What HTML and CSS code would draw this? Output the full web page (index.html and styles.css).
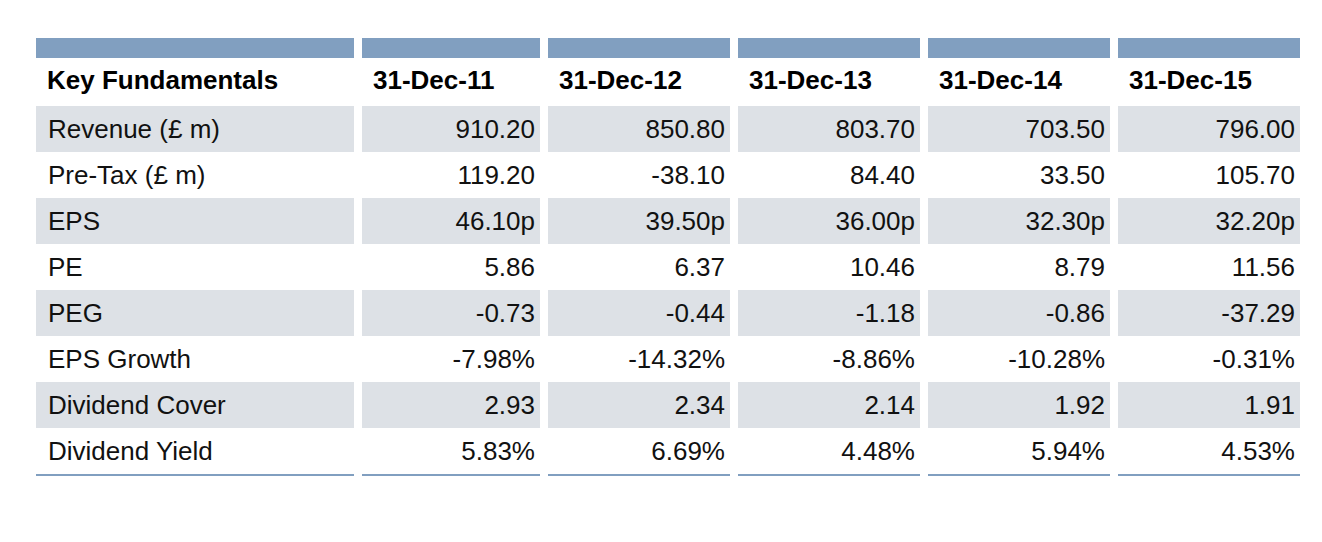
FILE: index.html
```html
<!DOCTYPE html>
<html lang="en">
<head>
<meta charset="utf-8">
<title>Key Fundamentals</title>
<link rel="stylesheet" href="styles.css">
</head>
<body>
<div class="wrap">
<table class="fund">
  <colgroup>
    <col class="c-label"><col class="c-narrow"><col class="c-num"><col class="c-num"><col class="c-num"><col class="c-num">
  </colgroup>
  <thead>
    <tr class="bar"><td></td><td></td><td></td><td></td><td></td><td></td></tr>
    <tr class="head">
      <th class="label">Key Fundamentals</th>
      <th>31-Dec-11</th><th>31-Dec-12</th><th>31-Dec-13</th><th>31-Dec-14</th><th>31-Dec-15</th>
    </tr>
  </thead>
  <tbody>
    <tr class="alt"><td class="label">Revenue (£ m)</td><td>910.20</td><td>850.80</td><td>803.70</td><td>703.50</td><td>796.00</td></tr>
    <tr><td class="label">Pre-Tax (£ m)</td><td>119.20</td><td>-38.10</td><td>84.40</td><td>33.50</td><td>105.70</td></tr>
    <tr class="alt"><td class="label">EPS</td><td>46.10p</td><td>39.50p</td><td>36.00p</td><td>32.30p</td><td>32.20p</td></tr>
    <tr><td class="label">PE</td><td>5.86</td><td>6.37</td><td>10.46</td><td>8.79</td><td>11.56</td></tr>
    <tr class="alt"><td class="label">PEG</td><td>-0.73</td><td>-0.44</td><td>-1.18</td><td>-0.86</td><td>-37.29</td></tr>
    <tr><td class="label">EPS Growth</td><td>-7.98%</td><td>-14.32%</td><td>-8.86%</td><td>-10.28%</td><td>-0.31%</td></tr>
    <tr class="alt"><td class="label">Dividend Cover</td><td>2.93</td><td>2.34</td><td>2.14</td><td>1.92</td><td>1.91</td></tr>
    <tr class="last"><td class="label">Dividend Yield</td><td>5.83%</td><td>6.69%</td><td>4.48%</td><td>5.94%</td><td>4.53%</td></tr>
  </tbody>
</table>
</div>
</body>
</html>
```

FILE: styles.css
```css
html, body {
  margin: 0;
  padding: 0;
  background: #ffffff;
}
body {
  font-family: "Liberation Sans", Arial, Helvetica, sans-serif;
  color: #111111;
}
.wrap {
  padding: 38px 0 0 28px;
}
.fund {
  border-collapse: separate;
  border-spacing: 8px 0;
  table-layout: fixed;
  width: 1280px;
  font-size: 26px;
}
.c-label { width: 318px; }
.c-narrow { width: 178px; }
.c-num { width: 182px; }
.fund td, .fund th {
  padding: 0 5px 0 12px;
  text-align: right;
  height: 46px;
  box-sizing: border-box;
  white-space: nowrap;
}
.fund .bar td {
  height: 20px;
  background: #819fc0;
  padding: 0;
}
.fund .head th {
  height: 48px;
  text-align: left;
  font-weight: bold;
  padding: 0 5px 4px 11px;
  color: #000000;
}
.fund td.label {
  text-align: left;
  padding-left: 12px;
}
.fund tr.alt td {
  background: #dde1e6;
}
.fund tr.last td {
  border-bottom: 2px solid #819fc0;
  height: 48px;
}
```
